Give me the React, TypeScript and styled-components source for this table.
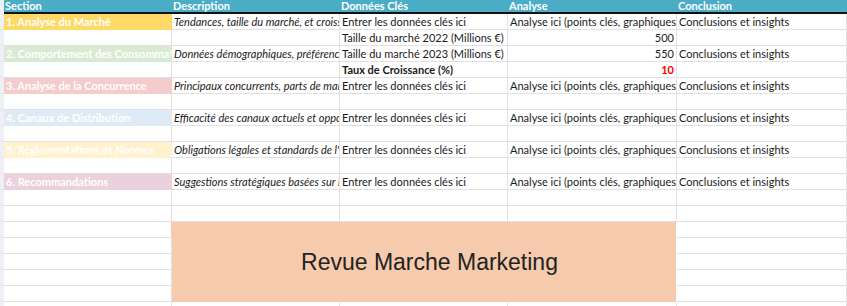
import React from "react";
import styled, { createGlobalStyle } from "styled-components";

const GlobalStyle = createGlobalStyle`
  html, body { margin: 0; padding: 0; background: #ffffff; }
  body { font-family: Lato, "Open Sans", sans-serif; overflow: hidden; }
`;

const GRID = "#e1e1e1";

const Sheet = styled.div`
  display: grid;
  grid-template-columns: 4px 168px 168px 168px 169px 170px;
  grid-template-rows: 14px;
  grid-auto-rows: 16px;
  width: 847px;
  height: 306px;
  overflow: hidden;
  font-size: 11px;
  color: #1b1b1b;
`;

const Gutter = styled.div<{ $head?: boolean }>`
  background: #eef0f5;
  border-bottom: 1px solid ${(p) => (p.$head ? "#eef0f5" : "#e4e6ec")};
  box-sizing: border-box;
`;

const HeadCell = styled.div`
  background: #4bacc6;
  color: #ffffff;
  font-weight: 700;
  line-height: 11px;
  padding-left: 1px;
  border-bottom: 2px solid #111111;
  box-sizing: border-box;
  white-space: nowrap;
  overflow: hidden;
`;

const Cell = styled.div<{
  $fill?: string;
  $bold?: boolean;
  $italic?: boolean;
  $align?: "left" | "right";
  $color?: string;
}>`
  box-sizing: border-box;
  background: ${(p) => p.$fill ?? "#ffffff"};
  border-right: 1px solid ${(p) => p.$fill ?? GRID};
  border-bottom: 1px solid ${(p) => p.$fill ?? GRID};
  padding: 0 2px;
  line-height: 15px;
  white-space: nowrap;
  overflow: hidden;
  text-align: ${(p) => p.$align ?? "left"};
  font-weight: ${(p) => (p.$bold ? 700 : 400)};
  font-style: ${(p) => (p.$italic ? "italic" : "normal")};
  color: ${(p) => p.$color ?? "#1b1b1b"};
`;

const Merged = styled.div`
  grid-column: span 3;
  grid-row: span 5;
  background: #f6cbad;
  display: flex;
  align-items: center;
  justify-content: center;
  padding-left: 12px;
  font-family: "Liberation Sans", Arial, sans-serif;
  font-size: 23px;
  color: #222222;
  margin-left: -1px;
  margin-right: 1px;
`;

type CellSpec = {
  text?: string;
  fill?: string;
  bold?: boolean;
  italic?: boolean;
  align?: "left" | "right";
  color?: string;
};

type RowSpec = { a?: CellSpec; b?: CellSpec; c?: CellSpec; d?: CellSpec; e?: CellSpec; merged?: "start" | "inside" };

const entrer: CellSpec = { text: "Entrer les données clés ici" };
const analyse: CellSpec = { text: "Analyse ici (points clés, graphiques, etc.)" };
const concl: CellSpec = { text: "Conclusions et insights" };
const section = (text: string, fill: string): CellSpec => ({ text, fill, bold: true, color: "#ffffff" });
const desc = (text: string): CellSpec => ({ text, italic: true });

const rows: RowSpec[] = [
  {
    a: section("1. Analyse du Marché", "#ffd966"),
    b: desc("Tendances, taille du marché, et croissance"),
    c: entrer,
    d: analyse,
    e: concl,
  },
  { c: { text: "Taille du marché 2022 (Millions €)" }, d: { text: "500", align: "right" } },
  {
    a: section("2. Comportement des Consommateurs", "#d9ead3"),
    b: desc("Données démographiques, préférences, et habitudes d'achat"),
    c: { text: "Taille du marché 2023 (Millions €)" },
    d: { text: "550", align: "right" },
    e: concl,
  },
  {
    c: { text: "Taux de Croissance (%)", bold: true },
    d: { text: "10", align: "right", bold: true, color: "#ff0000" },
  },
  {
    a: section("3. Analyse de la Concurrence", "#f4cccc"),
    b: desc("Principaux concurrents, parts de marché"),
    c: entrer,
    d: analyse,
    e: concl,
  },
  {},
  {
    a: section("4. Canaux de Distribution", "#deebf7"),
    b: desc("Efficacité des canaux actuels et opportunités"),
    c: entrer,
    d: analyse,
    e: concl,
  },
  {},
  {
    a: section("5. Réglementations et Normes", "#fff2cc"),
    b: desc("Obligations légales et standards de l'industrie"),
    c: entrer,
    d: analyse,
    e: concl,
  },
  {},
  {
    a: section("6. Recommandations", "#ead1dc"),
    b: desc("Suggestions stratégiques basées sur l'analyse"),
    c: entrer,
    d: analyse,
    e: concl,
  },
  {},
  {},
  { merged: "start" },
  { merged: "inside" },
  { merged: "inside" },
  { merged: "inside" },
  { merged: "inside" },
  {},
];

const headers = ["Section", "Description", "Données Clés", "Analyse", "Conclusion"];

function renderCell(spec: CellSpec | undefined, key: string) {
  return (
    <Cell
      key={key}
      $fill={spec?.fill}
      $bold={spec?.bold}
      $italic={spec?.italic}
      $align={spec?.align}
      $color={spec?.color}
    >
      {spec?.text ?? ""}
    </Cell>
  );
}

export default function App() {
  return (
    <>
      <GlobalStyle />
      <Sheet>
        <Gutter $head />
        {headers.map((h) => (
          <HeadCell key={h}>{h}</HeadCell>
        ))}
        {rows.map((r, i) => (
          <React.Fragment key={i}>
            <Gutter />
            {renderCell(r.a, `a${i}`)}
            {r.merged === "start" && <Merged>Revue Marche Marketing</Merged>}
            {!r.merged && renderCell(r.b, `b${i}`)}
            {!r.merged && renderCell(r.c, `c${i}`)}
            {!r.merged && renderCell(r.d, `d${i}`)}
            {renderCell(r.e, `e${i}`)}
          </React.Fragment>
        ))}
      </Sheet>
    </>
  );
}
